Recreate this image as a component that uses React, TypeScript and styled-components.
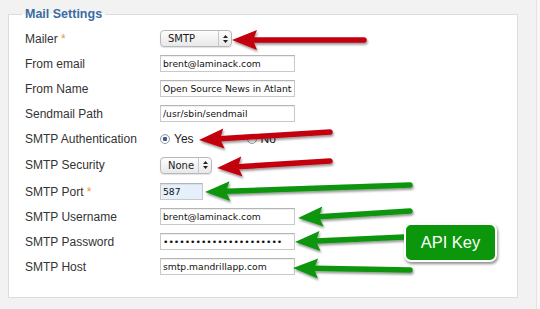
import styled, { createGlobalStyle } from "styled-components"

const GlobalStyle = createGlobalStyle`
	html, body {
		margin: 0;
		padding: 0;
	}
	body {
		background: #f7f7f7;
		width: 540px;
		height: 309px;
		overflow: hidden;
		font-family: "Liberation Sans", Arial, sans-serif;
	}
`

type Point = [number, number]

type ArrowSpec = {
	tip: Point
	tail: Point
	color: string
}

const ARROWS: ArrowSpec[] = [
	{ tip: [232, 40], tail: [364, 40], color: "#c3000b" },
	{ tip: [199, 140], tail: [330, 132], color: "#c3000b" },
	{ tip: [217, 168], tail: [330, 161], color: "#c3000b" },
	{ tip: [205, 192], tail: [410, 185], color: "#0a960c" },
	{ tip: [298, 218], tail: [410, 211], color: "#0a960c" },
	{ tip: [295, 242], tail: [405, 237], color: "#0a960c" },
	{ tip: [293, 268], tail: [410, 270], color: "#0a960c" },
]

const Arrow = ({ tip, tail, color }: ArrowSpec) => {
	const [tx, ty] = tip
	const [ax, ay] = tail
	const len = Math.hypot(ax - tx, ay - ty)
	const ux = (ax - tx) / len
	const uy = (ay - ty) / len
	const px = -uy
	const py = ux
	const headLen = 25
	const headHalf = 10
	const bx = tx + ux * headLen
	const by = ty + uy * headLen
	const nx = tx + ux * (headLen - 4)
	const ny = ty + uy * (headLen - 4)
	const points = [
		[tx, ty],
		[bx + px * headHalf, by + py * headHalf],
		[nx, ny],
		[bx - px * headHalf, by - py * headHalf],
	]
		.map(([x, y]) => `${x.toFixed(1)},${y.toFixed(1)}`)
		.join(" ")

	return (
		<g filter="url(#arrowShadow)">
			<line
				x1={nx}
				y1={ny}
				x2={ax}
				y2={ay}
				stroke={color}
				strokeWidth={5.5}
				strokeLinecap="round"
			/>
			<polygon points={points} fill={color} />
		</g>
	)
}

const UpDown = () => (
	<svg width="5" height="8" viewBox="0 0 5 8">
		<path d="M2.5 0 L5 3 L0 3 Z M0 5 L5 5 L2.5 8 Z" fill="#222" />
	</svg>
)

const App = () => {
	return (
		<Page>
			<GlobalStyle />
			<Fieldset>
				<Legend>Mail Settings</Legend>
				<Form>
					<Row>
						<Label>
							Mailer <Star>*</Star>
						</Label>
						<Select $w={72}>
							<SelectText>SMTP</SelectText>
							<SelectHandle>
								<UpDown />
							</SelectHandle>
						</Select>
					</Row>
					<Row>
						<Label>From email</Label>
						<TextInput readOnly value="brent@laminack.com" />
					</Row>
					<Row>
						<Label>From Name</Label>
						<TextInput readOnly value="Open Source News in Atlanta" />
					</Row>
					<Row>
						<Label>Sendmail Path</Label>
						<TextInput readOnly value="/usr/sbin/sendmail" />
					</Row>
					<Row>
						<Label>SMTP Authentication</Label>
						<RadioGroup>
							<RadioOption>
								<Radio $checked />
								Yes
							</RadioOption>
							<RadioOption>
								<Radio />
								No
							</RadioOption>
						</RadioGroup>
					</Row>
					<Row $h={28}>
						<Label>SMTP Security</Label>
						<Select $w={52}>
							<SelectText>None</SelectText>
							<SelectHandle>
								<UpDown />
							</SelectHandle>
						</Select>
					</Row>
					<Row>
						<Label>
							SMTP Port <Star>*</Star>
						</Label>
						<TextInput readOnly value="587" $w={43} $tint />
					</Row>
					<Row>
						<Label>SMTP Username</Label>
						<TextInput readOnly value="brent@laminack.com" />
					</Row>
					<Row>
						<Label>SMTP Password</Label>
						<TextInput readOnly type="password" value="abcdefghijklmnopqrstuv" />
					</Row>
					<Row>
						<Label>SMTP Host</Label>
						<TextInput readOnly value="smtp.mandrillapp.com" />
					</Row>
				</Form>
			</Fieldset>

			<Overlay viewBox="0 0 540 309">
				<defs>
					<filter id="arrowShadow" x="-20%" y="-50%" width="140%" height="200%">
						<feDropShadow
							dx="1"
							dy="2"
							stdDeviation="1"
							floodColor="#000"
							floodOpacity="0.4"
						/>
					</filter>
				</defs>
				{ARROWS.map((a, i) => (
					<Arrow key={i} {...a} />
				))}
			</Overlay>

			<Badge>API Key</Badge>
		</Page>
	)
}

export default App

const Page = styled.div`
	position: relative;
	width: 537px;
	height: 309px;
	box-sizing: border-box;
	padding: 6px 0 0 8px;
	background: #f2f2f2;
	border-right: 1px solid #e3e3e3;
`

const Fieldset = styled.fieldset`
	margin: 0;
	width: 510px;
	height: 292px;
	box-sizing: border-box;
	border: 1px solid #dcdcdc;
	background: #ffffff;
	padding: 0 0 0 13px;
	min-inline-size: 0;
`

const Legend = styled.legend`
	padding: 0 3px;
	font-size: 12.5px;
	line-height: 16px;
	font-weight: bold;
	color: #3c6ba3;
`

const Form = styled.div`
	display: flex;
	flex-direction: column;
	padding: 4px 0 0 3px;
`

const Row = styled.div<{ $h?: number }>`
	display: flex;
	align-items: center;
	height: ${(p) => p.$h ?? 25}px;
`

const Label = styled.div`
	width: 135px;
	font-size: 12px;
	color: #333333;
	white-space: nowrap;
`

const Star = styled.span`
	color: #e79a3a;
`

const TextInput = styled.input<{ $w?: number; $tint?: boolean }>`
	width: ${(p) => p.$w ?? 135}px;
	height: 17px;
	box-sizing: border-box;
	margin: 0;
	padding: 0 2px;
	border: 1px solid #c9c9c9;
	border-top-color: #b4b4b4;
	box-shadow: inset 0 1px 1px rgba(0, 0, 0, 0.07);
	background: ${(p) => (p.$tint ? "#e6f0fb" : "#ffffff")};
	font-family: "DejaVu Sans", sans-serif;
	font-size: 9.2px;
	color: #111111;
	outline: none;
`

const Select = styled.div<{ $w: number }>`
	display: flex;
	width: ${(p) => p.$w}px;
	height: 17px;
	box-sizing: border-box;
	border: 1px solid #b8b8b8;
	border-radius: 4px;
	background: linear-gradient(#fdfdfd, #e8e8e8);
	box-shadow: 0 1px 1px rgba(0, 0, 0, 0.12);
	font-family: "DejaVu Sans", sans-serif;
	font-size: 10px;
	color: #1a1a1a;
`

const SelectText = styled.span`
	flex: 1;
	display: flex;
	align-items: center;
	padding-left: 7px;
`

const SelectHandle = styled.span`
	width: 12px;
	display: flex;
	align-items: center;
	justify-content: center;
	border-left: 1px solid #c8c8c8;
`

const RadioGroup = styled.div`
	display: flex;
	gap: 53px;
`

const RadioOption = styled.label`
	display: flex;
	align-items: center;
	gap: 4px;
	font-size: 12px;
	color: #222222;
`

const Radio = styled.span<{ $checked?: boolean }>`
	width: 10px;
	height: 10px;
	box-sizing: border-box;
	border-radius: 50%;
	border: 1px solid #9a9a9a;
	background: radial-gradient(
		circle,
		${(p) => (p.$checked ? "#3a5d94 0 2px, #ffffff 2.5px" : "#ffffff 0")}
	);
	box-shadow: inset 0 1px 1px rgba(0, 0, 0, 0.1);
`

const Overlay = styled.svg`
	position: absolute;
	left: 0;
	top: 0;
	width: 540px;
	height: 309px;
	pointer-events: none;
	overflow: visible;
`

const Badge = styled.div`
	position: absolute;
	left: 404px;
	top: 223px;
	width: 93px;
	height: 39px;
	box-sizing: border-box;
	display: flex;
	align-items: center;
	justify-content: center;
	border: 2px solid #ffffff;
	border-radius: 7px;
	background: #0b960b;
	box-shadow: 1px 2px 3px rgba(0, 0, 0, 0.45);
	color: #ffffff;
	font-size: 16.5px;
`
